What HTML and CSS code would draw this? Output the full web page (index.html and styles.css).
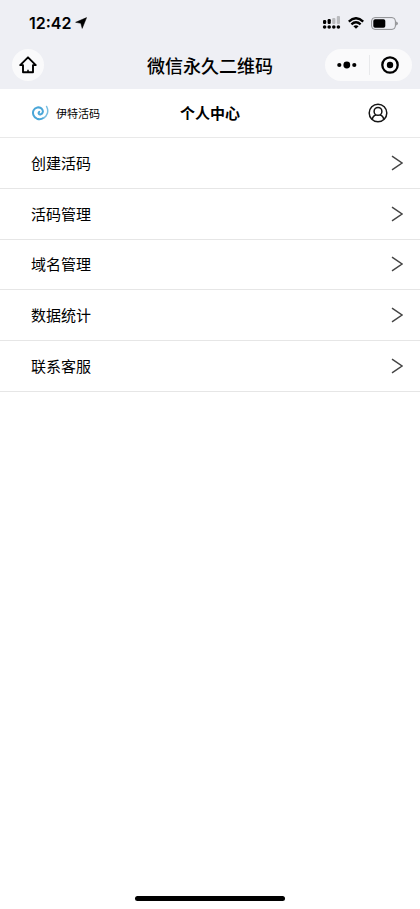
FILE: index.html
```html
<!DOCTYPE html>
<html lang="zh-CN">
<head>
<meta charset="utf-8">
<meta name="viewport" content="width=device-width, initial-scale=1">
<title>微信永久二维码</title>
<link rel="stylesheet" href="styles.css">
</head>
<body>
<header class="top">
  <div class="status">
    <span class="clock">12:42</span>
    <svg class="locate" width="12" height="12" viewBox="0 0 12 12"><path d="M11.6.6 7.2 11.4 5.8 6.3.6 5.3Z" stroke="#000" stroke-width=".5"/></svg>
    <div class="signals">
      <svg width="19" height="14" viewBox="0 0 19 14">
        <g fill="#b9babd"><rect x="10.2" y="2" width="3.2" height="6" rx="1"/><rect x="14.8" y="0" width="3.2" height="8" rx="1"/></g>
        <rect x="1" y="4" width="3.2" height="4" rx="1.2"/><rect x="5.6" y="3" width="3.2" height="5" rx="1.2"/>
        <circle cx="2.6" cy="11" r="1.8"/><circle cx="7.2" cy="11" r="1.8"/><circle cx="11.8" cy="11" r="1.8"/><circle cx="16.4" cy="11" r="1.8"/>
      </svg>
      <svg width="16" height="12" viewBox="0 0 16 12"><g fill="none" stroke="#000" stroke-width="2.3"><path d="M.8 4.6Q8-2.2 15.2 4.6"/><path d="M3.4 7.4Q8 3.2 12.6 7.4"/></g><path d="M5.4 9.2Q8 7.2 10.6 9.2L8 11.8Z"/></svg>
      <svg width="27" height="13" viewBox="0 0 27 13"><rect x=".6" y=".6" width="23.8" height="11.8" rx="3.4" fill="none" stroke="#8d8e91"/><rect x="2.3" y="2.3" width="12" height="8.4" rx="1.8"/><path d="M25.3 4.5q1.4.5 1.4 2t-1.4 2Z" fill="#77787a"/></svg>
    </div>
  </div>
  <div class="nav">
    <button class="home" type="button" aria-label="首页">
      <svg width="18" height="18" viewBox="0 0 18 18"><path d="M9 1.3 1.2 9.1H4V16.2H14V9.1H16.8Z" fill="none" stroke="#000" stroke-width="1.9" stroke-linejoin="round"/><path d="M9 13.8V16" stroke="#000" stroke-width="1.5"/></svg>
    </button>
    <h1 class="title">微信永久二维码</h1>
    <div class="capsule">
      <button type="button" aria-label="更多"><svg width="20" height="8" viewBox="0 0 20 8"><circle cx="2.3" cy="4" r="2.1"/><circle cx="9.8" cy="4" r="3.4"/><circle cx="17.3" cy="4" r="2.1"/></svg></button>
      <button type="button" aria-label="关闭"><svg width="18" height="18" viewBox="0 0 18 18"><circle cx="9" cy="9" r="7.7" fill="none" stroke="#000" stroke-width="2.3"/><circle cx="9" cy="9" r="3.2"/></svg></button>
    </div>
  </div>
</header>
<main class="content">
  <div class="brandbar">
    <div class="brand">
      <svg width="17" height="16" viewBox="0 0 17 16" fill="none" stroke="#4aa6d8" stroke-linecap="round"><path d="M7.2 6.8C5.8 8.4 7.2 9.8 8.8 9.3 11 8.6 11.6 5.8 9.8 3.8 7.4 1.3 3 2.3 1.5 5.4.2 8.4 1.5 12.2 5 13.7 7 14.5 9.6 14.2 11.4 13" stroke-width="2"/><path d="M11.4 13C15.4 10.8 17 6.2 14.6 1.5" stroke="#78bde1" stroke-width="1.5"/></svg>
      <span>伊特活码</span>
    </div>
    <h2 class="heading">个人中心</h2>
    <button class="account" type="button" aria-label="账户">
      <svg width="20" height="20" viewBox="0 0 20 20" fill="none" stroke="#151515" stroke-width="1.5"><circle cx="10" cy="10" r="8.8"/><circle cx="10" cy="8.4" r="3.9"/><path d="M4.2 16.5Q5 12.4 8.2 12M15.8 16.5Q15 12.4 11.8 12"/></svg>
    </button>
  </div>
  <nav class="menu">
    <a href="#create"><span>创建活码</span><svg width="12" height="16" viewBox="0 0 12 16"><path d="M1 1.2 11 8 1 14.8"/></svg></a>
    <a href="#codes"><span>活码管理</span><svg width="12" height="16" viewBox="0 0 12 16"><path d="M1 1.2 11 8 1 14.8"/></svg></a>
    <a href="#domains"><span>域名管理</span><svg width="12" height="16" viewBox="0 0 12 16"><path d="M1 1.2 11 8 1 14.8"/></svg></a>
    <a href="#stats"><span>数据统计</span><svg width="12" height="16" viewBox="0 0 12 16"><path d="M1 1.2 11 8 1 14.8"/></svg></a>
    <a href="#support"><span>联系客服</span><svg width="12" height="16" viewBox="0 0 12 16"><path d="M1 1.2 11 8 1 14.8"/></svg></a>
  </nav>
</main>
<footer class="bottom"><div class="indicator"></div></footer>
</body>
</html>
```
FILE: styles.css
```css
* {
  box-sizing: border-box;
}

body {
  margin: 0;
  min-height: 100vh;
  display: flex;
  flex-direction: column;
  background: #fff;
  color: #000;
  font-family: Inter, "Noto Sans CJK SC", sans-serif;
  font-size: 15px;
}

svg {
  display: block;
  flex: none;
}

button {
  display: flex;
  align-items: center;
  justify-content: center;
  padding: 0;
  border: 0;
  background: none;
}

h1,
h2 {
  margin: 0;
  text-align: center;
}

.top {
  background: #eeeff4;
  padding-bottom: 8px;
}

.status {
  display: flex;
  align-items: center;
  height: 49px;
  padding: 0 22px 3px 29px;
}

.clock {
  font-size: 16px;
  font-weight: 600;
}

.locate {
  margin-left: 4px;
}

.signals {
  display: flex;
  align-items: center;
  gap: 7px;
  margin-left: auto;
}

.nav {
  display: grid;
  grid-template-columns: 83px 1fr 87px;
  align-items: center;
  padding: 0 8px 0 12px;
}

.home {
  width: 32px;
  height: 32px;
  border-radius: 50%;
  background: #fafafb;
}

.title {
  padding-top: 4px;
  font-size: 18px;
  font-weight: 500;
  line-height: 24px;
  white-space: nowrap;
}

.capsule {
  display: flex;
  height: 32px;
  border-radius: 16px;
  background: #fafafb;
}

.capsule button {
  flex: 1;
}

.capsule button + button {
  position: relative;
}

.capsule button + button::before {
  content: "";
  position: absolute;
  left: 0;
  top: 6px;
  bottom: 6px;
  width: 1px;
  background: #e8e9eb;
}

.brandbar {
  display: grid;
  grid-template-columns: 1fr auto 1fr;
  align-items: center;
  height: 49px;
  padding: 0 32px;
  border-bottom: 1px solid #e9e9e9;
}

.brand {
  display: flex;
  align-items: center;
  gap: 7px;
  font-size: 11px;
}

.heading {
  padding-bottom: 2px;
  font-size: 15px;
  font-weight: 700;
}

.account {
  justify-self: end;
}

.menu {
  display: grid;
  grid-auto-rows: 1fr;
  min-height: 254px;
}

.menu a {
  display: flex;
  align-items: center;
  justify-content: space-between;
  padding: 0 17px 0 31px;
  border-bottom: 1px solid #e6e6e6;
  color: #000;
  text-decoration: none;
}

.menu span {
  padding-bottom: 1px;
}

.menu path {
  fill: none;
  stroke: #444;
  stroke-width: 1.4;
}

.bottom {
  display: flex;
  justify-content: center;
  margin-top: auto;
  padding-bottom: 8px;
}

.indicator {
  width: 150px;
  height: 5px;
  border-radius: 3px;
  background: #000;
}
```
